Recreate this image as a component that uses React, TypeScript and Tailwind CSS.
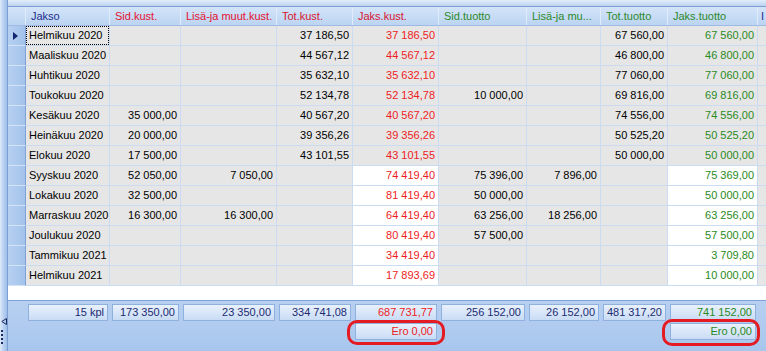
const COLS = "grid grid-cols-[18px_84px_71px_96px_76px_86px_88px_74px_67px_90px_1fr]";

type Col = { title: string; head: string; text: string; right: boolean };

const RED = "text-[#ee1b24]";
const GREEN = "text-[#2a8a1e]";

const COLUMNS: Col[] = [
  { title: "Jakso", head: "text-[#1c2f8c]", text: "text-black", right: false },
  { title: "Sid.kust.", head: "text-[#e3112e]", text: "text-black", right: true },
  { title: "Lisä-ja muut.kust.", head: "text-[#e3112e]", text: "text-black", right: true },
  { title: "Tot.kust.", head: "text-[#d6162f]", text: "text-black", right: true },
  { title: "Jaks.kust.", head: "text-[#d6162f]", text: RED, right: true },
  { title: "Sid.tuotto", head: "text-[#2b8a2b]", text: "text-black", right: true },
  { title: "Lisä-ja mu...", head: "text-[#2b8a2b]", text: "text-black", right: true },
  { title: "Tot.tuotto", head: "text-[#2b8a2b]", text: "text-black", right: true },
  { title: "Jaks.tuotto", head: "text-[#2b8a2b]", text: GREEN, right: true },
];

// jakso, sid.kust, lisä kust, tot.kust, jaks.kust, sid.tuotto, lisä tuotto, tot.tuotto, jaks.tuotto
const ROWS: string[][] = [
  ["Helmikuu 2020", "", "", "37 186,50", "37 186,50", "", "", "67 560,00", "67 560,00"],
  ["Maaliskuu 2020", "", "", "44 567,12", "44 567,12", "", "", "46 800,00", "46 800,00"],
  ["Huhtikuu 2020", "", "", "35 632,10", "35 632,10", "", "", "77 060,00", "77 060,00"],
  ["Toukokuu 2020", "", "", "52 134,78", "52 134,78", "10 000,00", "", "69 816,00", "69 816,00"],
  ["Kesäkuu 2020", "35 000,00", "", "40 567,20", "40 567,20", "", "", "74 556,00", "74 556,00"],
  ["Heinäkuu 2020", "20 000,00", "", "39 356,26", "39 356,26", "", "", "50 525,20", "50 525,20"],
  ["Elokuu 2020", "17 500,00", "", "43 101,55", "43 101,55", "", "", "50 000,00", "50 000,00"],
  ["Syyskuu 2020", "52 050,00", "7 050,00", "", "74 419,40", "75 396,00", "7 896,00", "", "75 369,00"],
  ["Lokakuu 2020", "32 500,00", "", "", "81 419,40", "50 000,00", "", "", "50 000,00"],
  ["Marraskuu 2020", "16 300,00", "16 300,00", "", "64 419,40", "63 256,00", "18 256,00", "", "63 256,00"],
  ["Joulukuu 2020", "", "", "", "80 419,40", "57 500,00", "", "", "57 500,00"],
  ["Tammikuu 2021", "", "", "", "34 419,40", "", "", "", "3 709,80"],
  ["Helmikuu 2021", "", "", "", "17 893,69", "", "", "", "10 000,00"],
];

const TOTALS = ["15 kpl", "173 350,00", "23 350,00", "334 741,08", "687 731,77", "256 152,00", "26 152,00", "481 317,20", "741 152,00"];

const sumBox =
  "mx-[2px] h-[17px] border border-[#8eb1e0] bg-gradient-to-b from-[#e9f1fc] to-[#c9dcf5] pr-[3px] text-right leading-[15px]";

function HeaderRow() {
  return (
    <div className={`${COLS} h-[19px] border-b border-[#9dbbe4] bg-gradient-to-b from-[#d3e4f9] to-[#bcd4f2]`}>
      <div className="border-r border-[#e2ecf9]" />
      {COLUMNS.map((c) => (
        <div key={c.title} className={`truncate border-r border-[#e2ecf9] pl-[5px] leading-[18px] ${c.head}`}>
          {c.title}
        </div>
      ))}
      <div className="overflow-hidden pl-[3px] leading-[18px] text-[#1c2f8c]">I</div>
    </div>
  );
}

function DataRow({ row, index }: { row: string[]; index: number }) {
  const late = index >= 7;
  return (
    <div className={`${COLS} h-[20px]`}>
      <div className="flex items-center justify-center border-b border-r border-b-[#d3e2f6] border-r-[#7fa2d6] bg-gradient-to-r from-[#b6d0f1] to-[#a3c2eb]">
        {index === 0 && (
          <svg width="5" height="8" viewBox="0 0 5 8" className="ml-[-2px]">
            <path d="M0 0 L5 4 L0 8 Z" fill="#13256e" />
          </svg>
        )}
      </div>
      {row.map((v, i) => {
        const c = COLUMNS[i];
        const white = late && (i === 4 || i === 8);
        return (
          <div
            key={i}
            className={`relative truncate border-b border-r border-[#cbdcf2] leading-[19px] ${
              c.right ? "pr-[3px] text-right" : "pl-[3px]"
            } ${white ? "bg-white" : "bg-[#e6e6e6]"} ${c.text}`}
          >
            {index === 0 && i === 0 && (
              <span className="absolute inset-x-0 top-0 bottom-0 border border-dotted border-black" />
            )}
            {v}
          </div>
        );
      })}
      <div className="border-b border-[#cbdcf2] bg-[#e6e6e6]" />
    </div>
  );
}

function Footer() {
  return (
    <div className="flex h-[51px] flex-col gap-[2px] border-t border-[#7fa3d8] bg-gradient-to-b from-[#b7d0f1] to-[#a8c6ed] pt-[3px] text-[#1c2b72]">
      <div className={COLS}>
        <div />
        {TOTALS.map((t, i) => (
          <div key={i} className={`${sumBox} ${i === 4 ? RED : i === 8 ? GREEN : ""}`}>
            {t}
          </div>
        ))}
      </div>
      <div className={COLS}>
        <div className="col-span-5" />
        <div className={`${sumBox} ${RED}`}>Ero 0,00</div>
        <div className="col-span-3" />
        <div className={`${sumBox} ${GREEN}`}>Ero 0,00</div>
      </div>
    </div>
  );
}

export default function App() {
  return (
    <div
      className="relative flex h-[351px] w-[766px] overflow-hidden bg-white text-[11px]"
      style={{ fontFamily: '"Liberation Sans", Arial, sans-serif' }}
    >
      {/* splitter */}
      <div className="flex w-[8px] flex-col items-start border-r border-[#7c9ed3] bg-gradient-to-r from-[#dfeaf8] via-[#b9d1f1] to-[#9ebee9]">
        <div className="flex-1" />
        <svg width="6" height="7" viewBox="0 0 6 7" className="ml-[1px]">
          <path d="M5.5 0.5 L0.8 3.5 L5.5 6.5 Z" fill="none" stroke="#1a2a5e" strokeWidth="1" />
        </svg>
        <div className="mb-[7px] ml-[1px] mt-[5px] flex flex-col gap-[2px]">
          {[0, 1, 2, 3].map((d) => (
            <span key={d} className="block h-[2px] w-[2px] bg-[#1a2a5e]" />
          ))}
        </div>
      </div>

      <div className="flex flex-1 flex-col">
        <div className="h-[7px] border-b border-[#7c9ed3] bg-gradient-to-b from-[#e3edfa] to-[#bcd3f1]" />
        <HeaderRow />
        {ROWS.map((r, i) => (
          <DataRow key={i} row={r} index={i} />
        ))}
        <div className="flex-1 bg-white" />
        <Footer />
      </div>

      {/* annotation rings */}
      <div className="absolute left-[347px] top-[320px] h-[25px] w-[98px] rounded-[10px] border-[3px] border-[#e41b23]" />
      <div className="absolute left-[662px] top-[319px] h-[27px] w-[98px] rounded-[10px] border-[3px] border-[#e41b23]" />
    </div>
  );
}
